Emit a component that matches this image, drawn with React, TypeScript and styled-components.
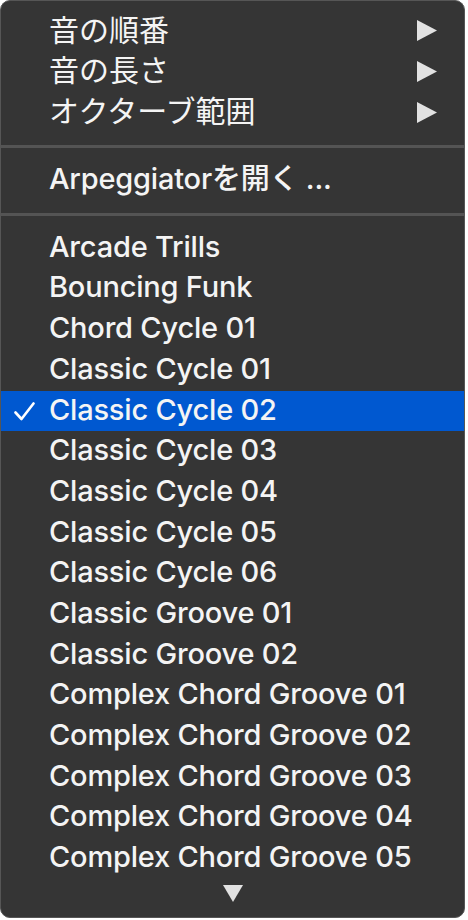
import React from "react";
import styled, { createGlobalStyle } from "styled-components";

const Global = createGlobalStyle`
  html, body { margin: 0; padding: 0; background: #ffffff; }
  body { font-family: Inter, "Noto Sans CJK JP", sans-serif; }
`;

const Menu = styled.div`
  box-sizing: border-box;
  width: 465px;
  margin: 0;
  padding: 9.4px 0 10px;
  background: #353535;
  border: 1px solid #565656;
  border-radius: 10px;
  display: flex;
  flex-direction: column;
  overflow: hidden;
`;

const Row = styled.div<{ $selected?: boolean }>`
  box-sizing: border-box;
  height: 40.7px;
  display: grid;
  grid-template-columns: 48px 1fr 20px;
  align-items: center;
  padding-right: 27px;
  background: ${(p) => (p.$selected ? "#0058d0" : "transparent")};
  color: #f4f4f4;
  font-family: Inter, "Noto Sans CJK JP", sans-serif;
  font-size: 29px;
  line-height: 1;
  white-space: nowrap;
`;

const Label = styled.span<{ $jp?: boolean }>`
  position: relative;
  top: ${(p) => (p.$jp ? "-1px" : "-2px")};
  font-size: ${(p) => (p.$jp ? "30px" : "29px")};
  font-weight: ${(p) => (p.$jp ? 400 : 500)};
  letter-spacing: ${(p) => (p.$jp ? "0" : "-0.2px")};
`;

const Mark = styled.span`
  display: flex;
  justify-content: flex-end;
  padding-right: 14px;
  align-items: center;
`;

const Trail = styled.span`
  display: flex;
  align-items: center;
  justify-content: center;
`;

const Separator = styled.div`
  height: 27.4px;
  display: flex;
  align-items: center;
  &::after {
    content: "";
    display: block;
    width: 100%;
    height: 3px;
    background: #545454;
  }
`;

const ScrollRow = styled.div`
  height: 26px;
  display: flex;
  justify-content: center;
  align-items: center;
  padding-top: 2px;
`;

const RightTri = () => (
  <svg width="20" height="21" viewBox="0 0 20 21">
    <polygon points="0,0 20,10.5 0,21" fill="#e2e2e2" />
  </svg>
);

const DownTri = () => (
  <svg width="20" height="17" viewBox="0 0 20 17">
    <polygon points="0,0 20,0 10,17" fill="#e2e2e2" />
  </svg>
);

const Check = () => (
  <svg width="21" height="19" viewBox="0 0 21 19">
    <polyline
      points="1.5,10.5 7.5,17 19.5,1.5"
      fill="none"
      stroke="#ffffff"
      strokeWidth="2.6"
      strokeLinecap="round"
      strokeLinejoin="round"
    />
  </svg>
);

const subMenus = ["音の順番", "音の長さ", "オクターブ範囲"];
const presets = [
  "Arcade Trills",
  "Bouncing Funk",
  "Chord Cycle 01",
  "Classic Cycle 01",
  "Classic Cycle 02",
  "Classic Cycle 03",
  "Classic Cycle 04",
  "Classic Cycle 05",
  "Classic Cycle 06",
  "Classic Groove 01",
  "Classic Groove 02",
  "Complex Chord Groove 01",
  "Complex Chord Groove 02",
  "Complex Chord Groove 03",
  "Complex Chord Groove 04",
  "Complex Chord Groove 05",
];
const selected = "Classic Cycle 02";

export default function App() {
  return (
    <>
      <Global />
      <Menu>
        {subMenus.map((s) => (
          <Row key={s}>
            <Mark />
            <Label $jp>{s}</Label>
            <Trail>
              <RightTri />
            </Trail>
          </Row>
        ))}
        <Separator />
        <Row>
          <Mark />
          <Label>Arpeggiatorを開く ...</Label>
          <Trail />
        </Row>
        <Separator />
        {presets.map((p) => (
          <Row key={p} $selected={p === selected}>
            <Mark>{p === selected ? <Check /> : null}</Mark>
            <Label>{p}</Label>
            <Trail />
          </Row>
        ))}
        <ScrollRow>
          <DownTri />
        </ScrollRow>
      </Menu>
    </>
  );
}
